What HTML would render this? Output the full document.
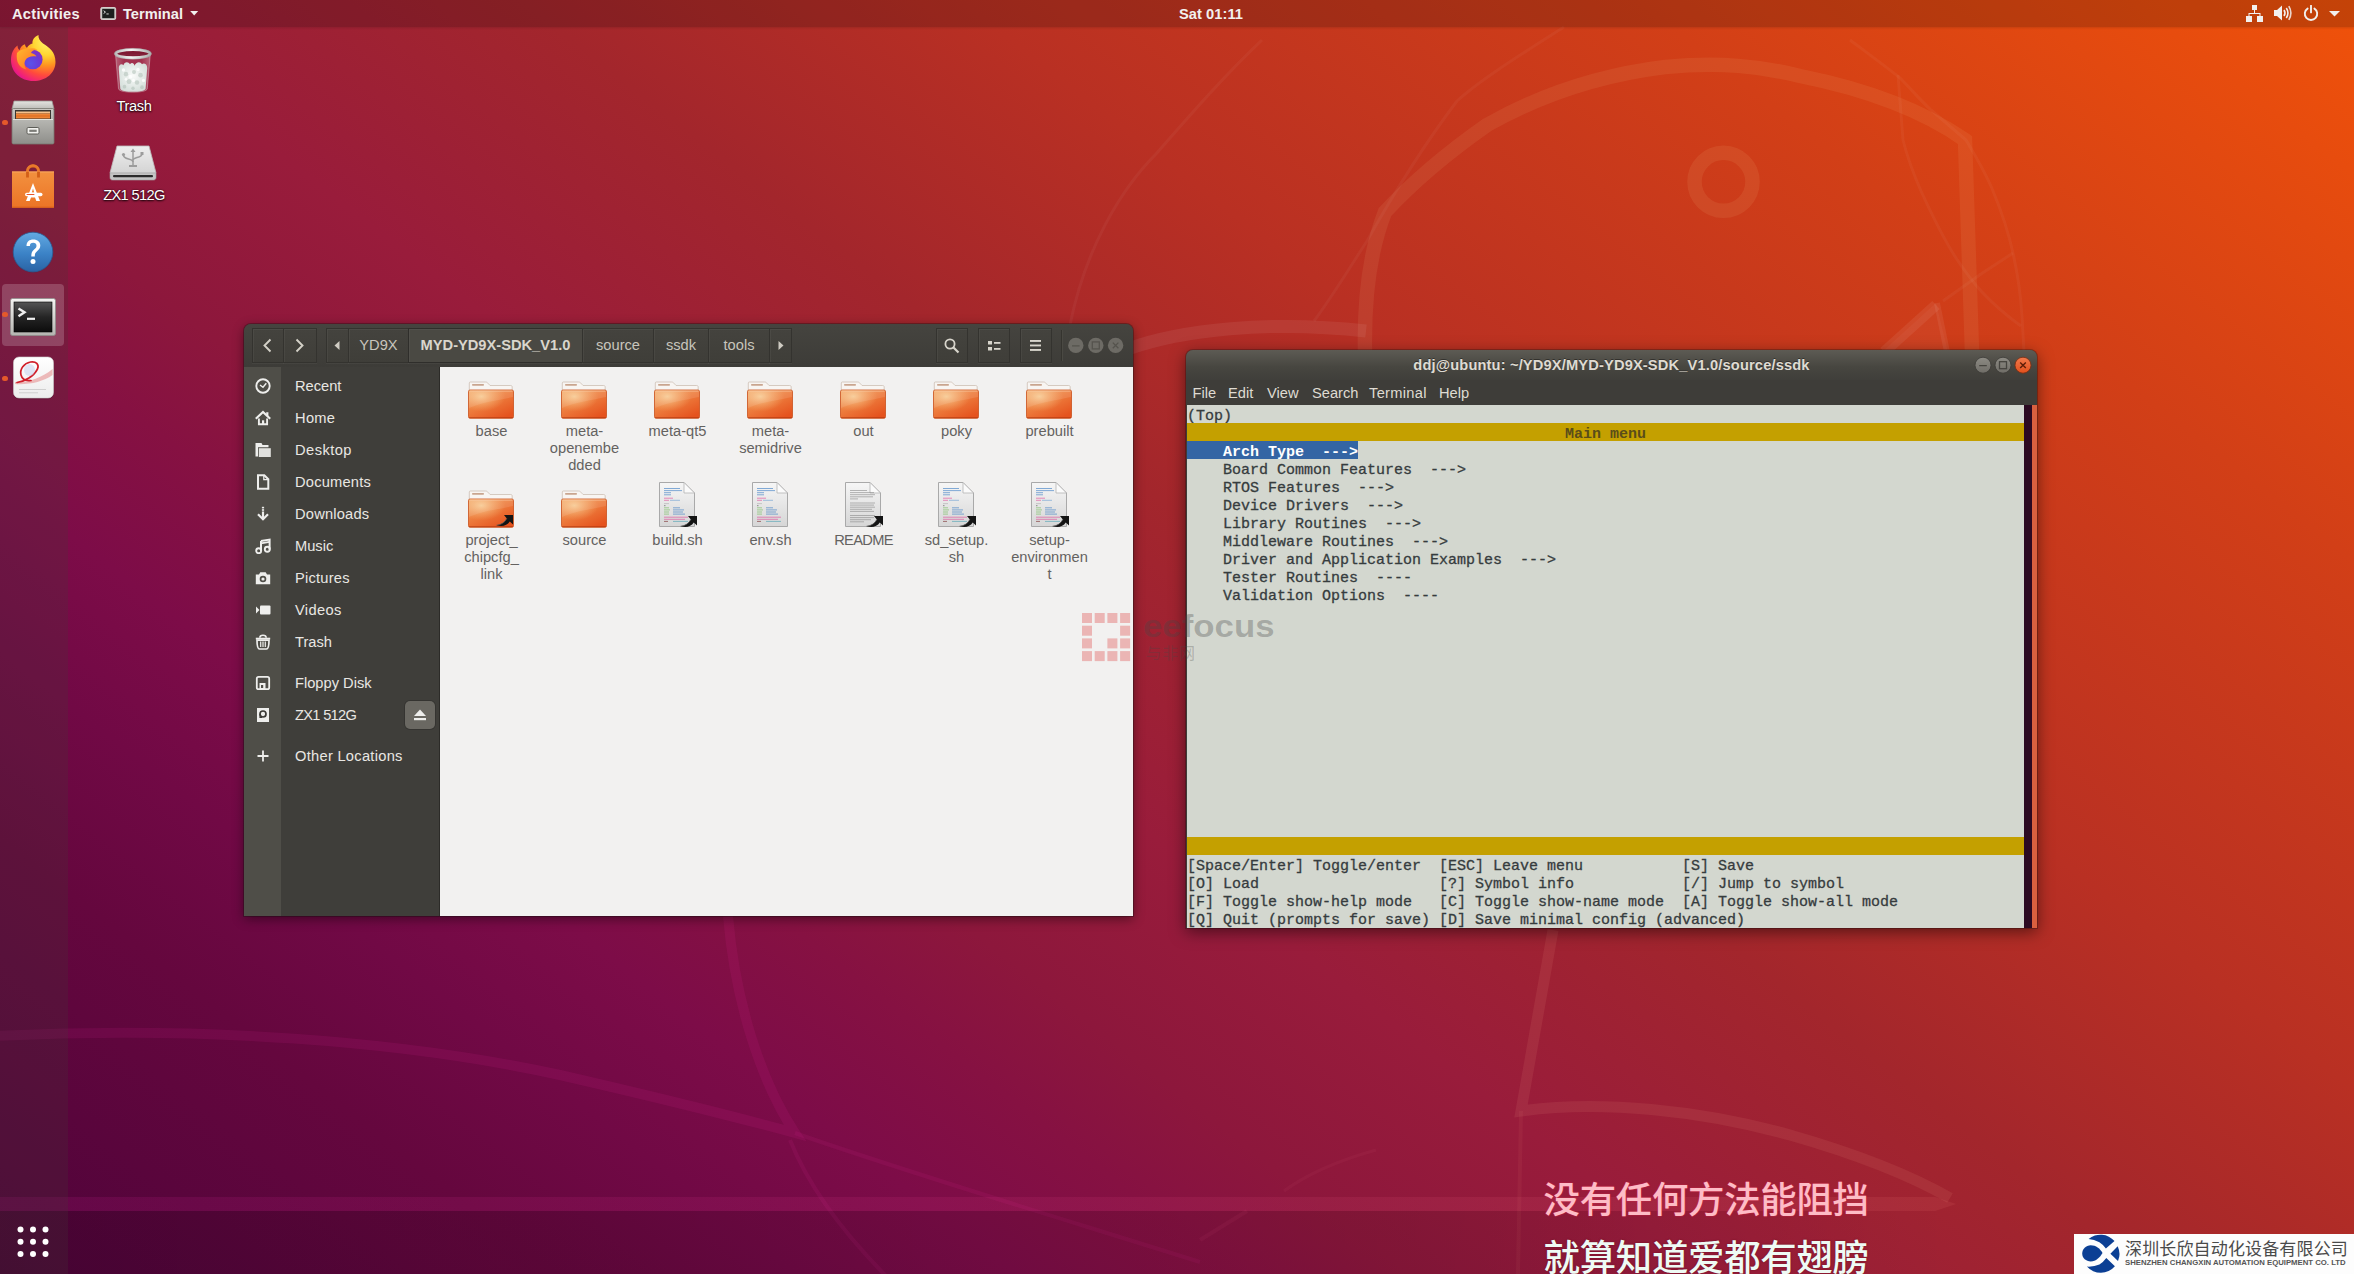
<!DOCTYPE html>
<html lang="en"><head><meta charset="utf-8"><title>Ubuntu Desktop</title>
<style>
html,body{margin:0;padding:0}
body{width:2354px;height:1274px;overflow:hidden;position:relative;background:#8c1839;
 font-family:"Liberation Sans","Noto Sans CJK SC",sans-serif;font-size:14.67px;line-height:17px;color:#fff;
 -webkit-font-smoothing:antialiased}
.abs{position:absolute}
#wall{position:absolute;left:0;top:0;width:2354px;height:1274px;
 background:linear-gradient(38deg,rgb(78,3,58) 0%,rgb(101,7,62) 14%,rgb(113,9,69) 20%,rgb(125,12,72) 25.5%,rgb(134,17,66) 31%,rgb(141,23,60) 35.4%,rgb(153,28,59) 43%,rgb(163,38,44) 54%,rgb(185,48,35) 65%,rgb(210,63,23) 82%,rgb(231,76,14) 94.4%,rgb(240,82,10) 100%)}
#wallsvg{position:absolute;left:0;top:0}
/* top bar */
#panel{position:absolute;left:0;top:0;width:2354px;height:27px;background:rgba(0,0,0,.18);color:#f2f0ee;font-weight:bold;box-shadow:0 1px 2px rgba(0,0,0,.12)}
#panel span{position:absolute;top:5.6px;line-height:17px;white-space:pre}
/* dock */
#dock{position:absolute;left:0;top:27px;width:68px;height:1247px;background:rgba(64,60,54,.21)}
.dot{position:absolute;left:2.300px;width:5.400px;height:5.400px;border-radius:3px;background:#e5592b}
/* desktop icons */
.dlabel{position:absolute;width:140px;text-align:center;color:#fff;text-shadow:0 1px 2px rgba(0,0,0,.9),0 0 2px rgba(0,0,0,.6);white-space:pre}
/* nautilus */
#naut{position:absolute;left:244px;top:324px;width:889px;height:592px;border-radius:7px 7px 0 0;background:#3f3e3a;box-shadow:0 3px 12px rgba(0,0,0,.45),0 0 0 1px rgba(30,20,20,.35);overflow:hidden}
#nhead{position:absolute;left:0;top:0;width:889px;height:43px;background:linear-gradient(#45443f,#3d3c38)}
.hbtn{position:absolute;top:4px;height:35px;box-sizing:border-box;border:1px solid #34332f;background:linear-gradient(#44433e,#3f3e39);box-shadow:inset 1px 1px 0 rgba(255,255,255,.045),0 1px 0 rgba(255,255,255,.04);color:#c8c5bc;text-align:center;line-height:33px;white-space:pre}
.hbtn.sel{background:#4a4943;color:#d9d6cd;font-weight:bold;border-color:#2f2e2b}
#nstrip{position:absolute;left:0;top:43px;width:37px;height:549px;background:#4f4e48}
#nside{position:absolute;left:37px;top:43px;width:158px;height:549px;background:#3f3e3a}
#nview{position:absolute;left:195px;top:43px;width:694px;height:549px;background:#f2f1f0;border-left:1px solid #2c2b28;box-sizing:border-box}
.srow{position:absolute;left:51px;color:#e9e7e3;white-space:pre;line-height:17px}
.sic{position:absolute;left:11px;width:16px;height:16px}
.flabel{position:absolute;width:110px;text-align:center;color:#646260;line-height:17px;white-space:pre}
.fic{position:absolute}
/* terminal */
#term{position:absolute;left:1186px;top:350px;width:851px;height:578px;border-radius:7px 7px 0 0;background:#3e3d39;box-shadow:0 4px 16px rgba(0,0,0,.5),0 0 0 1px rgba(40,20,20,.3);overflow:hidden}
#ttitle{position:absolute;left:0;top:0;width:851px;height:31px;background:linear-gradient(#5d5b54,#474640 55%,#3f3e3a)}
#ttitle span{position:absolute;left:0;width:851px;top:7px;text-align:center;font-weight:bold;color:#dfdbd2;letter-spacing:.145px;white-space:pre;text-shadow:0 -1px 0 rgba(0,0,0,.4)}
#tmenu{position:absolute;left:0;top:30px;width:851px;height:25px;background:#3e3d39;color:#dfdbd2}
#tmenu span{position:absolute;top:4.7px;white-space:pre}
#tbody{position:absolute;left:1px;top:55px;width:837px;height:523px;background:#d3d7cf;color:#363c3e;-webkit-text-stroke:.3px #363c3e;
 font-family:"Liberation Mono","DejaVu Sans Mono",monospace;font-size:15px;line-height:18px}
.tl{position:absolute;left:0;height:18px;white-space:pre;padding-top:3px;margin-top:0;line-height:18px}
#tpad{position:absolute;left:838px;top:55px;width:8px;height:523px;background:#2c0a22}
#tscroll{position:absolute;left:846px;top:55px;width:5px;height:523px;background:#d9603f}
.wc{position:absolute;width:16px;height:16px;border-radius:8px;box-sizing:border-box}
</style></head><body>
<div id="wall"></div>
<svg id="wallsvg" width="2354" height="1274" viewBox="0 0 2354 1274">
 <g fill="none" stroke="#fff" stroke-opacity=".065" stroke-linejoin="miter" stroke-linecap="butt">
  <circle cx="1723.500" cy="181.800" r="29" stroke-width="14.500" stroke="#ffe9a0" stroke-opacity=".085"/>
  <path d="M1365,352 C1364,300 1370,250 1385,212 C1410,185 1440,158 1487,125 C1540,95 1600,75 1665,67 C1720,62 1760,66 1800,76 C1870,90 1925,112 1965,140 L1972,352" stroke-width="14.500" stroke="#ffe9a0" stroke-opacity=".08"/>
  <path d="M1128,349 C1180,330 1270,320 1366,331" stroke-width="13"/>
  <path d="M1882,352 L1936,303 L1948,352 Z" fill="#fff" fill-opacity=".035" stroke="none"/><path d="M1884,352 L1936,305" stroke-width="11"/><path d="M1937,303 L1947,352" stroke-width="6"/>
  <path d="M1553,930 L1521,1111 C1600,1100 1700,1110 1790,1135 C1860,1155 1915,1178 1950,1198" stroke-width="11" stroke="#ffb090" stroke-opacity=".095"/>
  <path d="M-5,1036 C200,1026 400,1040 560,1075 C660,1098 740,1118 795,1133 C760,1080 735,1000 728,916" stroke-width="10" stroke="#ff30b0" stroke-opacity=".09"/>
  <path d="M795,1133 C900,1170 1050,1215 1200,1262" stroke-width="4" stroke="#ff30b0" stroke-opacity=".08"/><path d="M1200,1240 L1247,1211" stroke-width="4" stroke="#ff60a0" stroke-opacity=".07"/><path d="M1284,1191 C1310,1172 1340,1160 1376,1150" stroke-width="3" stroke="#ff80a0" stroke-opacity=".05"/><path d="M1521,1111 L1518,1274" stroke-width="4" stroke="#ffb090" stroke-opacity=".06"/>
  <path d="M790,1140 C810,1190 850,1240 890,1280" stroke-width="4" stroke="#ff30b0" stroke-opacity=".08"/>
  <path d="M1070,325 C1085,250 1120,190 1156,154 C1190,115 1225,75 1262,40" stroke-width="3" stroke-opacity=".04"/><path d="M1564,27 C1520,55 1480,80 1457,101 C1420,150 1390,200 1367,241 C1345,275 1330,300 1314,321" stroke-width="3" stroke-opacity=".04"/>
  <path d="M1850,40 C1870,55 1885,66 1900,78 C1912,90 1920,100 1931,110 L1966,140 C1978,160 1987,176 1993,191 C2003,215 2009,235 2013,253 C2019,280 2021,300 2022,316 L2024,352" stroke-width="3" stroke-opacity=".04"/><path d="M1898,75 L1903,140 C1908,160 1914,175 1921,191 C1932,215 1943,238 1956,258 C1964,270 1972,281 1981,291 C1994,305 2007,316 2021,326" stroke-width="3" stroke-opacity=".04"/><path d="M2013,253 L1981,274 L1943,301" stroke-width="3" stroke-opacity=".04"/>
 </g>
 <defs><linearGradient id="bandg" x1="0" y1="0" x2="1" y2="0"><stop offset="0" stop-color="#ff28bc" stop-opacity=".10"/><stop offset=".5" stop-color="#ff4a9a" stop-opacity=".10"/><stop offset="1" stop-color="#ff8a80" stop-opacity=".10"/></linearGradient></defs><path d="M0,1197 L1935,1197 L1956,1204 L1935,1211 L0,1211 Z" fill="url(#bandg)"/>
 <defs><linearGradient id="tailg" x1="0" y1="0" x2="1" y2="0"><stop offset="0" stop-color="#000" stop-opacity=".13"/><stop offset=".3" stop-color="#000" stop-opacity=".11"/><stop offset=".6" stop-color="#000" stop-opacity=".095"/><stop offset=".72" stop-color="#000" stop-opacity=".045"/><stop offset=".83" stop-color="#000" stop-opacity="0"/></linearGradient></defs><rect x="0" y="1211" width="2354" height="63" fill="url(#tailg)"/>
</svg>
<div id="panel">
 <span style="left:12px;letter-spacing:.28px">Activities</span>
 <svg class="abs" style="left:100px;top:6.8px" width="16.5" height="13" viewBox="0 0 17 14"><rect x=".5" y=".5" width="16" height="13" rx="1.5" fill="#c4c4c0" stroke="#dcdcd8"/><rect x="2" y="2" width="13" height="10" fill="#1d1f1e"/><path d="M3.5,4 L5.5,5.5 L3.5,7 M6.5,7.5 H9" stroke="#e8e8e8" stroke-width="1" fill="none"/></svg>
 <span style="left:123px">Terminal</span>
 <svg class="abs" style="left:190.400px;top:11.200px" width="8.400" height="4.800" viewBox="0 0 10 6"><path d="M0,0 H10 L5,5.5 Z" fill="#f2f0ee"/></svg>
 <span style="left:1179px;letter-spacing:.05px">Sat 01:11</span>
 <!-- network -->
 <svg class="abs" style="left:2246px;top:5px" width="17" height="17" viewBox="0 0 17 17"><g fill="#f2f0ee"><rect x="6" y="0" width="5" height="5"/><rect x="0" y="11" width="6" height="6"/><rect x="11" y="11" width="6" height="6"/><path d="M8,5 h1 v3 h5.5 v3 h-1 v-2 h-10 v2 h-1 v-3 h5.5 z"/></g></svg>
 <!-- volume -->
 <svg class="abs" style="left:2274px;top:5px" width="18" height="16" viewBox="0 0 18 16"><path d="M0,5 H3 L8,0.5 V15.5 L3,11 H0 Z" fill="#f2f0ee"/><g fill="none" stroke="#f2f0ee" stroke-width="1.6"><path d="M10,5 Q12,8 10,11"/><path d="M12.3,3 Q15.6,8 12.3,13"/><path d="M14.8,1.2 Q19,8 14.8,14.8" stroke-opacity=".85"/></g></svg>
 <!-- power -->
 <svg class="abs" style="left:2303px;top:5px" width="16" height="16" viewBox="0 0 16 16"><g fill="none" stroke="#f2f0ee" stroke-width="1.9" stroke-linecap="round"><path d="M4.6,3.6 A6.2,6.2 0 1 0 11.4,3.6"/><path d="M8,0.8 V7.4"/></g></svg>
 <svg class="abs" style="left:2329px;top:11px" width="11" height="6" viewBox="0 0 11 6"><path d="M0,0 H11 L5.5,5.5 Z" fill="#f2f0ee"/></svg>
</div>
<div id="dock"></div>
<!-- firefox -->
<svg class="abs" style="left:10px;top:34px" width="47" height="48" viewBox="0 0 47 48">
 <defs>
  <radialGradient id="ffg" cx="80%" cy="14%" r="100%"><stop offset="0" stop-color="#fff56a"/><stop offset=".3" stop-color="#ffd531"/><stop offset=".52" stop-color="#ff9420"/><stop offset=".74" stop-color="#ff4a3d"/><stop offset=".92" stop-color="#f0207a"/><stop offset="1" stop-color="#e01590"/></radialGradient>
  <radialGradient id="ffp" cx="40%" cy="70%" r="75%"><stop offset="0" stop-color="#5b52e8"/><stop offset=".6" stop-color="#6a3ad6"/><stop offset="1" stop-color="#8a2fc0"/></radialGradient>
  <linearGradient id="ffo" x1="0" y1="0" x2="1" y2="1"><stop offset="0" stop-color="#ffb92e"/><stop offset="1" stop-color="#ff6a20"/></linearGradient>
 </defs>
 <path d="M23.5,47 C10.5,47 1,38 1,26 C1,19.500 3.500,14.500 7.500,11.500 C7.500,13.500 8.200,15.200 9.500,16.200 C10.500,13 12.500,11 15,10.200 C15,11.800 15.800,13 17,13.800 C18,11.500 20.500,10 22.500,9.500 C22,6 24.500,2.500 28.500,1 C28,4 30,7 33,9.500 C39.500,13.500 45.500,18 45.500,28 C45.500,39 36,47 23.500,47 Z" fill="url(#ffg)"/>
 <circle cx="22.800" cy="25.500" r="9.800" fill="url(#ffp)"/>
 <path d="M7,19 C10,15.500 14,14.500 17.500,15.200 C20,14 24,14 27.500,15.600 C24,15.800 22,17 21,19 C23.500,19.500 25.500,20.500 26.500,22.500 C22,21.700 17.500,22.500 15.500,26 C13.700,29 14.500,33 16.500,35.500 C10,34.500 5.500,28 7,19 Z" fill="url(#ffo)"/>
</svg>
<!-- files -->
<svg class="abs" style="left:11px;top:100px" width="44" height="45" viewBox="0 0 44 45">
 <defs><linearGradient id="fcg" x1="0" y1="0" x2="0" y2="1"><stop offset="0" stop-color="#c9c9c4"/><stop offset="1" stop-color="#8e8e8a"/></linearGradient>
 <linearGradient id="fct" x1="0" y1="0" x2="0" y2="1"><stop offset="0" stop-color="#e4e4e0"/><stop offset="1" stop-color="#bcbcb7"/></linearGradient></defs>
 <path d="M3,1 H41 L43,9 H1 Z" fill="url(#fct)" stroke="#9a9a96" stroke-width=".8"/>
 <rect x="1" y="8.500" width="42" height="35.500" rx="1.500" fill="url(#fcg)" stroke="#77776f" stroke-width=".8"/>
 <rect x="4" y="10" width="36" height="9.500" fill="#3a3631"/>
 <rect x="5" y="11.500" width="34" height="2" fill="#f6c08a"/><rect x="5" y="13.500" width="34" height="5" fill="#ee8436"/><rect x="5" y="15.500" width="34" height="1" fill="#d96a1e"/>
 <path d="M2,19.500 H42" stroke="#e2e2de" stroke-width="1"/>
 <rect x="16" y="27.500" width="12" height="6.500" rx="1.200" fill="#f1f1ee" stroke="#5c5c57" stroke-width="1"/><rect x="18.300" y="29.700" width="7.400" height="2.200" fill="#7d7d78"/>
</svg>
<!-- software -->
<svg class="abs" style="left:11px;top:164px" width="44" height="45" viewBox="0 0 44 45">
 <defs><linearGradient id="swg" x1="0" y1="0" x2="0" y2="1"><stop offset="0" stop-color="#f2913f"/><stop offset="1" stop-color="#ec7426"/></linearGradient></defs>
 <path d="M16.500,14 V7.500 A5.500,5.500 0 0 1 27.500,7.500 V14" fill="none" stroke="#dd6a1f" stroke-width="2.800"/>
 <path d="M1,7.500 H43 V43.700 H1 Z" fill="url(#swg)"/>
 <path d="M1,8 H43" stroke="#f7a55e" stroke-width="1"/><path d="M1,43.200 H43" stroke="#d9611a" stroke-width="1"/>
 <path d="M16.500,13.500 V8 M27.500,13.500 V8" stroke="#d25f18" stroke-width="2.800"/>
 <path d="M16.500,8 V6.500 A5.500,5 0 0 1 27.500,6.500 V8" fill="none" stroke="#e8792c" stroke-width="2.400"/>
 <path d="M22,19 L29,37 H25.300 L24,33.500 H20 L18.700,37 H15 Z M22,24.500 L20.800,28.500 H23.200 Z" fill="#fff"/>
 <rect x="14" y="28.800" width="17.500" height="3.400" rx="1.700" fill="#fff"/><rect x="15.500" y="29.900" width="8" height="1.200" rx=".6" fill="#e8552a"/>
</svg>
<!-- help -->
<svg class="abs" style="left:12px;top:231px" width="42" height="42" viewBox="0 0 42 42">
 <defs><linearGradient id="hpg" x1="0" y1="0" x2="0" y2="1"><stop offset="0" stop-color="#63a9e2"/><stop offset=".55" stop-color="#3b82c6"/><stop offset="1" stop-color="#2a63a4"/></linearGradient></defs>
 <circle cx="21" cy="21.500" r="20" fill="#1d3f66" fill-opacity=".35"/>
 <circle cx="21" cy="21" r="19.800" fill="url(#hpg)" stroke="#2b5c94" stroke-width=".8"/>
 <path d="M14.500,15 C14.500,10.500 17.500,8.500 21.300,8.500 C25.500,8.500 28.300,11 28.300,14.500 C28.300,17.500 26.500,19 24.800,20.500 C23.300,21.800 22.800,22.800 22.800,25.500 H19.300 C19.300,22 19.900,20.500 21.800,18.800 C23.400,17.400 24.500,16.500 24.500,14.700 C24.500,13 23.300,11.800 21.200,11.800 C19,11.800 17.900,13 17.900,15 Z" fill="#fff"/>
 <circle cx="21" cy="30.500" r="2.500" fill="#fff"/>
</svg>
<!-- terminal highlight + icon -->
<div class="abs" style="left:2px;top:284px;width:62px;height:62px;border-radius:4px;background:rgba(255,255,255,.19)"></div>
<svg class="abs" style="left:10px;top:298px" width="46" height="38" viewBox="0 0 46 38">
 <defs><linearGradient id="tmf" x1="0" y1="0" x2="0" y2="1"><stop offset="0" stop-color="#f4f4f2"/><stop offset="1" stop-color="#b4b4b0"/></linearGradient>
 <linearGradient id="tms" x1="0" y1="0" x2="0" y2="1"><stop offset="0" stop-color="#555"/><stop offset=".5" stop-color="#252525"/><stop offset="1" stop-color="#0c0c0c"/></linearGradient></defs>
 <rect x=".5" y=".5" width="45" height="37" rx="2" fill="url(#tmf)" stroke="#8f8f8b" stroke-width=".8"/>
 <rect x="4" y="4" width="38" height="30" fill="url(#tms)" stroke="#000" stroke-width=".6"/>
 <path d="M8.500,10.500 L14.500,14.300 L8.500,18.200" fill="none" stroke="#f0f0f0" stroke-width="2.400"/>
 <rect x="17" y="19.700" width="8" height="2.200" fill="#f0f0f0"/>
</svg>
<!-- evince -->
<svg class="abs" style="left:12px;top:356px" width="43" height="44" viewBox="0 0 43 44">
 <defs><linearGradient id="evg" x1="0" y1="0" x2="0" y2="1"><stop offset="0" stop-color="#ffffff"/><stop offset="1" stop-color="#ececec"/></linearGradient></defs>
 <rect x="1.500" y="2.200" width="40" height="41" rx="5.500" fill="#3a0a1c" fill-opacity=".35"/>
 <rect x="1.500" y="1" width="40" height="41" rx="5.500" fill="url(#evg)" stroke="#cfcfcf" stroke-width=".6"/>
 <path d="M3,26 C14,27 30,22 40.500,13 V19 C31,26 16,29 3,28 Z" fill="#e8a0a0" fill-opacity=".7"/>
 <path d="M5,26.500 C13,25.500 22,20 25.500,13 C27.500,8.500 24,5 18.500,6 C12,7.200 7.500,13 9,19 C10,23 14,25 19,24.500" fill="none" stroke="#d01f2a" stroke-width="1.700" stroke-linecap="round"/>
 <ellipse cx="17.500" cy="14" rx="5.500" ry="6" fill="#c8d4ee" fill-opacity=".55"/>
 <path d="M7,33.500 H34 M7,36.800 H26" stroke="#cfcfcf" stroke-width="1"/>
</svg>
<div class="dot" style="top:120px"></div><div class="dot" style="top:312px"></div><div class="dot" style="top:376px"></div>
<!-- show apps -->
<svg class="abs" style="left:17px;top:1226px" width="32" height="32" viewBox="0 0 32 32"><g fill="#fff">
<circle cx="3.500" cy="3.500" r="3"/><circle cx="16" cy="3.500" r="3"/><circle cx="28.500" cy="3.500" r="3"/>
<circle cx="3.500" cy="15.800" r="3"/><circle cx="16" cy="15.800" r="3"/><circle cx="28.500" cy="15.800" r="3"/>
<circle cx="3.500" cy="28" r="3"/><circle cx="16" cy="28" r="3"/><circle cx="28.500" cy="28" r="3"/></g></svg>
<!-- desktop icons -->
<svg class="abs" style="left:112px;top:46px" width="42" height="50" viewBox="0 0 42 48" preserveAspectRatio="none">
 <defs><linearGradient id="trb" x1="0" y1="0" x2="1" y2="0"><stop offset="0" stop-color="#ffffff" stop-opacity=".30"/><stop offset=".25" stop-color="#ffffff" stop-opacity=".10"/><stop offset=".75" stop-color="#ffffff" stop-opacity=".10"/><stop offset="1" stop-color="#ffffff" stop-opacity=".32"/></linearGradient>
 <linearGradient id="trr" x1="0" y1="0" x2="1" y2="0"><stop offset="0" stop-color="#bdbdbd"/><stop offset=".45" stop-color="#f4f4f4"/><stop offset="1" stop-color="#b0b0b0"/></linearGradient>
 <radialGradient id="trp" cx="50%" cy="45%" r="60%"><stop offset="0" stop-color="#fafbfa"/><stop offset="1" stop-color="#d3ded9"/></radialGradient></defs>
 <path d="M3.500,8 L6.500,41 C6.800,45.500 35,45.500 35.300,41 L38.300,8 Z" fill="url(#trb)" stroke="#e6e6e6" stroke-opacity=".45" stroke-width=".8"/>
 <path d="M6.800,22 C6.300,18 9.500,16.500 11.500,18.500 C12,15 16.500,14.500 18,17.500 C19.500,15.500 22,16 22.500,19 C24,15 28.500,14.500 30,17.500 C31.500,16 35.300,17 35.200,21 L33.600,41 C33,45 8.800,45 8.300,41 Z" fill="url(#trp)"/>
 <g fill="#aebfb7" fill-opacity=".55"><circle cx="14" cy="27" r="2.200"/><circle cx="22" cy="25" r="2"/><circle cx="28.500" cy="28" r="2.300"/><circle cx="17" cy="34" r="2.400"/><circle cx="25" cy="35" r="2.200"/><circle cx="12.500" cy="39" r="1.800"/><circle cx="30" cy="39.500" r="1.800"/><circle cx="21" cy="40.500" r="1.700"/></g>
 <g fill="#ffffff" fill-opacity=".8"><circle cx="11.500" cy="23" r="1.700"/><circle cx="18.500" cy="29.500" r="1.800"/><circle cx="26" cy="22.500" r="1.700"/><circle cx="31.500" cy="33" r="1.600"/><circle cx="21.500" cy="33" r="1.500"/><circle cx="14" cy="32" r="1.300"/></g>
 <ellipse cx="20.900" cy="7.400" rx="17.300" ry="3.900" fill="#7c1a33" fill-opacity=".9" stroke="url(#trr)" stroke-width="2.800"/>
 <ellipse cx="20.900" cy="7.400" rx="18.700" ry="5.200" fill="none" stroke="#8e8e8e" stroke-opacity=".55" stroke-width=".6"/>
</svg>
<div class="dlabel" style="left:64px;top:97.5px;letter-spacing:-.35px">Trash</div>
<svg class="abs" style="left:109px;top:145px" width="48" height="36" viewBox="0 0 48 36">
 <defs><linearGradient id="usg" x1="0" y1="0" x2="0" y2="1"><stop offset="0" stop-color="#eeeeee"/><stop offset="1" stop-color="#d4d4d4"/></linearGradient></defs>
 <path d="M8,1 H40 L47,28 H1 Z" fill="url(#usg)" stroke="#bdbdbd" stroke-width=".8"/>
 <path d="M1,28 H47 V32.500 C47,34 46,35 44.500,35 H3.500 C2,35 1,34 1,32.500 Z" fill="#c4c4c4" stroke="#a5a5a5" stroke-width=".6"/>
 <rect x="4" y="30" width="40" height="2.200" rx="1" fill="#2b2b2b"/>
 <g fill="none" stroke="#9c9c9c" stroke-width="1.500"><path d="M24,6 V21"/><path d="M24,17 C24,13 14,15 14.500,10"/><path d="M24,15 C24,12 33,13 33,9"/></g>
 <path d="M21.500,7 L24,3.500 L26.500,7 Z" fill="#9c9c9c"/><circle cx="14.500" cy="9.500" r="1.600" fill="#9c9c9c"/><rect x="31.500" y="7" width="3" height="3" fill="#9c9c9c"/><rect x="20" y="20" width="8" height="2" fill="#9c9c9c"/>
</svg>
<div class="dlabel" style="left:64px;top:187px;letter-spacing:-.65px">ZX1 512G</div>
<svg width="0" height="0" style="position:absolute"><defs>
<linearGradient id="fg1" x1="0" y1="0" x2=".75" y2="1"><stop offset="0" stop-color="#f3a868"/><stop offset=".45" stop-color="#ee8040"/><stop offset="1" stop-color="#e5531e"/></linearGradient>
<radialGradient id="fg2" cx="28%" cy="22%" r="55%"><stop offset="0" stop-color="#f8d09a" stop-opacity=".9"/><stop offset="1" stop-color="#f5b070" stop-opacity="0"/></radialGradient>
<linearGradient id="dg1" x1="0" y1="0" x2="0" y2="1"><stop offset="0" stop-color="#f6f6f6"/><stop offset="1" stop-color="#d6d6d6"/></linearGradient>
<symbol id="folder" viewBox="0 0 46 38">
 <path d="M2.300,1 H17.500 C18.800,1 19.300,1.500 20.200,2.500 L22,4.500 H42.700 C43.600,4.500 44.200,5 44.200,6 V14 H1.300 V2 C1.300,1.400 1.700,1 2.300,1 Z" fill="#f8f5f2" stroke="#cdbfb4" stroke-width=".8"/>
 <rect x="4" y="3" width="12" height="1.700" rx=".8" fill="#c9a58f"/>
 <rect x=".5" y="9" width="45" height="28.300" rx="1.600" fill="url(#fg1)" stroke="#c9501c" stroke-width=".8"/>
 <rect x="1" y="9.500" width="44" height="27.300" rx="1.400" fill="url(#fg2)"/>
 <path d="M1,10 H45 V16 C32,19 14,21 1,27 Z" fill="#fff" fill-opacity=".10"/>
 <path d="M1.200,36.600 H44.800" stroke="#a8300b" stroke-width="1" stroke-opacity=".5"/>
 <path d="M1.500,10 H44.500" stroke="#f9cda8" stroke-width="1" stroke-opacity=".75"/>
</symbol>
<symbol id="docscript" viewBox="0 0 38 47">
 <path d="M1.500,1.500 H26 L36.500,12 V45.500 H1.500 Z" fill="url(#dg1)" stroke="#a9a9a9" stroke-width="1"/>
 <path d="M26,1.500 V12 H36.500 Z" fill="#fbfbfb" stroke="#b4b4b4" stroke-width=".8"/>
 <g stroke-width=".75" fill="none" stroke-opacity=".85">
  <path d="M6,7.500 H22 M6,9.600 H24 M6,11.700 H13 M6,13.800 H13" stroke="#3f7fc4"/>
  <path d="M6,17.200 H15 M6,19.300 H11" stroke="#de4f9a"/><path d="M12,19.300 H22" stroke="#6fa0d2"/>
  <path d="M6,22.600 H11" stroke="#b0b0b0"/><path d="M6,24.700 H7.500" stroke="#555"/>
  <path d="M6,26.800 H11 M6,28.900 H12 M6,31 H11 M6,33.100 H11" stroke="#74bd5e"/>
  <path d="M15,26.800 H22 M15,28.900 H26 M15,31 H25 M15,33.100 H27" stroke="#3f7fc4"/>
  <path d="M6,36.200 H30 M6,38.300 H27" stroke="#de4f9a"/>
  <path d="M6,40.400 H10" stroke="#7b2c2c"/><path d="M15,40.400 H30" stroke="#4da0b2"/>
 </g>
</symbol>
<symbol id="doctext" viewBox="0 0 38 47">
 <path d="M1.500,1.500 H26 L36.500,12 V45.500 H1.500 Z" fill="url(#dg1)" stroke="#a9a9a9" stroke-width="1"/>
 <path d="M26,1.500 V12 H36.500 Z" fill="#fbfbfb" stroke="#b4b4b4" stroke-width=".8"/>
 <g stroke="#8d8d8d" stroke-width=".7" fill="none" stroke-opacity=".9">
  <path d="M6,9.500 H23 M6,11.600 H30 M6,13.700 H31 M6,15.800 H29 M6,17.900 H14"/>
  <path d="M6,22 H31 M6,24.100 H30 M6,26.200 H31 M6,28.300 H28 M6,30.400 H30"/>
  <path d="M6,34.500 H31 M6,36.600 H30 M6,38.700 H27 M6,40.800 H20"/>
 </g>
</symbol>
<symbol id="lnk" viewBox="0 0 17 12">
 <path d="M8,0 H17 V9.500 L13.800,6.500 C11,10.500 6.500,12 0.500,10.200 C5.500,9.800 8.800,7.500 10.800,3.600 Z" fill="#141414"/>
 <path d="M0.500,10.200 C5.500,9.800 8.800,7.500 10.800,3.600" stroke="#5a5a5a" stroke-width=".7" fill="none"/>
</symbol>
</defs></svg>
<div id="naut">
<div id="nhead">
<div class="hbtn " style="left:8px;width:32px;"></div>
<div class="hbtn " style="left:39px;width:34px;"></div>
<div class="hbtn " style="left:82px;width:23px;"></div>
<div class="hbtn " style="left:104px;width:61px;">YD9X</div>
<div class="hbtn sel" style="left:164px;width:175px;">MYD-YD9X-SDK_V1.0</div>
<div class="hbtn " style="left:338px;width:72px;">source</div>
<div class="hbtn " style="left:409px;width:56px;">ssdk</div>
<div class="hbtn " style="left:464px;width:62px;">tools</div>
<div class="hbtn " style="left:525px;width:23px;"></div>
<div class="hbtn " style="left:692px;width:32px;"></div>
<div class="hbtn " style="left:734px;width:32px;"></div>
<div class="hbtn " style="left:776px;width:32px;"></div>
<svg class="abs" style="left:0;top:0" width="889" height="43" viewBox="0 0 889 43">
<g fill="none" stroke="#d4d1c8" stroke-width="1.900" stroke-linecap="butt" stroke-linejoin="miter">
 <path d="M26.500,15.500 L20.500,21.500 L26.500,27.500"/><path d="M52.500,15.500 L58.500,21.500 L52.500,27.500"/>
</g>
<g fill="#cfccc3"><path d="M95.500,17 V26 L90.500,21.500 Z"/><path d="M534.500,17 V26 L539.500,21.500 Z"/></g>
<g fill="none" stroke="#d8d5cc" stroke-width="1.800"><circle cx="706" cy="20" r="4.600"/><path d="M709.500,23.500 L714.500,28.500" stroke-width="2.200"/></g>
<g fill="#d8d5cc"><rect x="744" y="17" width="4" height="3.500"/><rect x="744" y="23" width="4" height="3.500"/><rect x="750" y="18" width="6.500" height="1.800"/><rect x="750" y="24" width="6.500" height="1.800"/>
 <rect x="786" y="16" width="11" height="1.900"/><rect x="786" y="20.500" width="11" height="1.900"/><rect x="786" y="25" width="11" height="1.900"/></g>
<path d="M817.500,6 V37" stroke="#35342f" stroke-width="1"/><path d="M818.500,6 V37" stroke="#4a4943" stroke-width="1"/>
<g><circle cx="831.800" cy="21.400" r="7.700" fill="#6d6b65"/><circle cx="851.800" cy="21.400" r="7.700" fill="#6d6b65"/><circle cx="871.600" cy="21.400" r="7.700" fill="#6d6b65"/></g>
<g stroke="#55534d" stroke-width="1.300" fill="none"><path d="M828,21.900 H835.600"/><rect x="848.300" y="17.900" width="7" height="7"/><path d="M868.800,18.600 L874.400,24.200 M874.400,18.600 L868.800,24.200"/></g>
</svg>
</div>
<div id="nstrip"></div><div id="nside"></div><div id="nview"></div>
<div class="srow" style="top:54px;letter-spacing:0">Recent</div>
<div class="srow" style="top:86px;letter-spacing:.3px">Home</div>
<div class="srow" style="top:118px;letter-spacing:.45px">Desktop</div>
<div class="srow" style="top:150px;letter-spacing:.2px">Documents</div>
<div class="srow" style="top:182px;letter-spacing:.2px">Downloads</div>
<div class="srow" style="top:214px;letter-spacing:0">Music</div>
<div class="srow" style="top:246px;letter-spacing:.23px">Pictures</div>
<div class="srow" style="top:278px;letter-spacing:.35px">Videos</div>
<div class="srow" style="top:310px;letter-spacing:0">Trash</div>
<div class="srow" style="top:351px;letter-spacing:0">Floppy Disk</div>
<div class="srow" style="top:383px;letter-spacing:-.7px">ZX1 512G</div>
<div class="srow" style="top:424px;letter-spacing:.28px">Other Locations</div>
<svg class="sic" style="top:54px" viewBox="0 0 16 16"><circle cx="8" cy="8" r="6.700" fill="none" stroke="#eeeeec" stroke-width="1.900"/><path d="M5,7 L8,9.300 L11.300,5.300" fill="none" stroke="#eeeeec" stroke-width="1.400"/></svg>
<svg class="sic" style="top:86px" viewBox="0 0 16 16"><path d="M0.800,8.800 L8,2 L15.200,8.800" fill="none" stroke="#eeeeec" stroke-width="2.200" stroke-linejoin="miter"/><path d="M11.200,2.300 H13.400 V6.200 L11.200,4.200 Z" fill="#eeeeec"/><path d="M3.900,8.500 V14.200 H12.100 V8.500" fill="none" stroke="#eeeeec" stroke-width="1.900"/><rect x="7" y="10.300" width="2.200" height="4" fill="#eeeeec"/></svg>
<svg class="sic" style="top:118px" viewBox="0 0 16 16"><path d="M0.500,1 H6.500 L7.500,3 H13.500 V5.200 H3 V14.500 H0.500 Z" fill="#eeeeec"/><rect x="3.800" y="6.200" width="12" height="8.800" fill="#eeeeec" fill-opacity=".92"/></svg>
<svg class="sic" style="top:150px" viewBox="0 0 16 16"><path d="M3,1.200 H9.300 L13.300,5.200 V14.800 H3 Z" fill="none" stroke="#eeeeec" stroke-width="2"/><path d="M8.800,1.500 V5.700 H13" fill="none" stroke="#eeeeec" stroke-width="1.300"/></svg>
<svg class="sic" style="top:182px" viewBox="0 0 16 16"><path d="M8,5.500 V12.500" stroke="#eeeeec" stroke-width="2.200" fill="none"/><path d="M3,8.300 L8,13.300 L13,8.300" fill="none" stroke="#eeeeec" stroke-width="2.200"/><rect x="6.900" y="0.800" width="2.200" height="1.600" fill="#eeeeec"/><rect x="6.900" y="3.200" width="2.200" height="1.600" fill="#eeeeec"/></svg>
<svg class="sic" style="top:214px" viewBox="0 0 16 16"><path d="M6,3 L14.600,1.600 V11.500 M6,3 V13" fill="none" stroke="#eeeeec" stroke-width="2"/><path d="M6,5.300 L14.600,3.900" stroke="#eeeeec" stroke-width="1.800"/><circle cx="3.700" cy="12.700" r="2.500" fill="none" stroke="#eeeeec" stroke-width="1.900"/><circle cx="12.300" cy="11.300" r="2.500" fill="none" stroke="#eeeeec" stroke-width="1.900"/></svg>
<svg class="sic" style="top:246px" viewBox="0 0 16 16"><path d="M0.800,4.500 H4 L5.300,2.300 H10.700 L12,4.500 H15.200 V14.200 H0.800 Z" fill="#eeeeec"/><circle cx="8" cy="9" r="3.300" fill="#4f4e48"/><circle cx="8" cy="9" r="1.600" fill="#eeeeec"/></svg>
<svg class="sic" style="top:278px" viewBox="0 0 16 16"><rect x="5" y="3.500" width="10.500" height="9" rx="1" fill="#eeeeec"/><path d="M1,4.500 L4.500,8 L1,11.500 Z" fill="#eeeeec"/></svg>
<svg class="sic" style="top:310px" viewBox="0 0 16 16"><path d="M0.800,4.600 H15.200" stroke="#eeeeec" stroke-width="1.800"/><path d="M4.800,3.800 Q4.800,1.300 8,1.300 Q11.200,1.300 11.200,3.800" fill="none" stroke="#eeeeec" stroke-width="1.500"/><path d="M2,6.200 Q2,15 4.500,15 H11.500 Q14,15 14,6.200 Z" fill="none" stroke="#eeeeec" stroke-width="1.700"/><path d="M5.700,7.500 V13 M8,7.500 V13 M10.300,7.500 V13" stroke="#eeeeec" stroke-width="1.200"/></svg>
<svg class="sic" style="top:351px" viewBox="0 0 16 16"><rect x="1.800" y="1.800" width="12.400" height="12.400" rx="1.800" fill="none" stroke="#eeeeec" stroke-width="1.800"/><rect x="4.500" y="8" width="6" height="6" fill="#eeeeec"/><rect x="6" y="10" width="2.200" height="3" fill="#4f4e48"/></svg>
<svg class="sic" style="top:383px" viewBox="0 0 16 16"><rect x="2" y="1" width="12" height="14" fill="#eeeeec"/><circle cx="8" cy="7" r="3" fill="none" stroke="#3a3935" stroke-width="1.700"/><path d="M5,7 V10.300 H7" stroke="#3a3935" stroke-width="1.200" fill="none"/></svg>
<svg class="sic" style="top:424px" viewBox="0 0 16 16"><path d="M8,2.500 V13.500 M2.500,8 H13.500" stroke="#eeeeec" stroke-width="1.800"/></svg>
<div class="abs" style="left:161px;top:377px;width:30px;height:28px;border-radius:5px;background:#6a6862;box-shadow:0 0 0 1px rgba(0,0,0,.15)"></div>
<svg class="abs" style="left:169px;top:384px" width="14" height="14" viewBox="0 0 14 14"><path d="M7,1.500 L13,8 H1 Z" fill="#eeeeec"/><rect x="1" y="10" width="12" height="2.200" fill="#eeeeec"/></svg>
<svg class="fic" style="left:223.8px;top:57px" width="46" height="38"><use href="#folder"/></svg>
<div class="flabel" style="left:192.5px;top:99px;letter-spacing:0">base</div>
<svg class="fic" style="left:316.8px;top:57px" width="46" height="38"><use href="#folder"/></svg>
<div class="flabel" style="left:285.5px;top:99px;letter-spacing:0">meta-
openembe
dded</div>
<svg class="fic" style="left:409.8px;top:57px" width="46" height="38"><use href="#folder"/></svg>
<div class="flabel" style="left:378.5px;top:99px;letter-spacing:0">meta-qt5</div>
<svg class="fic" style="left:502.8px;top:57px" width="46" height="38"><use href="#folder"/></svg>
<div class="flabel" style="left:471.5px;top:99px;letter-spacing:0">meta-
semidrive</div>
<svg class="fic" style="left:595.8px;top:57px" width="46" height="38"><use href="#folder"/></svg>
<div class="flabel" style="left:564.5px;top:99px;letter-spacing:0">out</div>
<svg class="fic" style="left:688.8px;top:57px" width="46" height="38"><use href="#folder"/></svg>
<div class="flabel" style="left:657.5px;top:99px;letter-spacing:0">poky</div>
<svg class="fic" style="left:781.8px;top:57px" width="46" height="38"><use href="#folder"/></svg>
<div class="flabel" style="left:750.5px;top:99px;letter-spacing:0">prebuilt</div>
<svg class="fic" style="left:223.8px;top:166px" width="46" height="38"><use href="#folder"/></svg>
<svg class="fic" style="left:251.5px;top:191px" width="17" height="12"><use href="#lnk"/></svg>
<div class="flabel" style="left:192.5px;top:208px;letter-spacing:0">project_
chipcfg_
link</div>
<svg class="fic" style="left:316.8px;top:166px" width="46" height="38"><use href="#folder"/></svg>
<div class="flabel" style="left:285.5px;top:208px;letter-spacing:0">source</div>
<svg class="fic" style="left:414.0px;top:156.5px" width="38" height="47"><use href="#docscript"/></svg>
<svg class="fic" style="left:435.5px;top:191.5px" width="17" height="12"><use href="#lnk"/></svg>
<div class="flabel" style="left:378.5px;top:208px;letter-spacing:0">build.sh</div>
<svg class="fic" style="left:507.0px;top:156.5px" width="38" height="47"><use href="#docscript"/></svg>
<div class="flabel" style="left:471.5px;top:208px;letter-spacing:0">env.sh</div>
<svg class="fic" style="left:600.0px;top:156.5px" width="38" height="47"><use href="#doctext"/></svg>
<svg class="fic" style="left:621.5px;top:191.5px" width="17" height="12"><use href="#lnk"/></svg>
<div class="flabel" style="left:564.5px;top:208px;letter-spacing:-.7px">README</div>
<svg class="fic" style="left:693.0px;top:156.5px" width="38" height="47"><use href="#docscript"/></svg>
<svg class="fic" style="left:714.5px;top:191.5px" width="17" height="12"><use href="#lnk"/></svg>
<div class="flabel" style="left:657.5px;top:208px;letter-spacing:0">sd_setup.
sh</div>
<svg class="fic" style="left:786.0px;top:156.5px" width="38" height="47"><use href="#docscript"/></svg>
<svg class="fic" style="left:807.5px;top:191.5px" width="17" height="12"><use href="#lnk"/></svg>
<div class="flabel" style="left:750.5px;top:208px;letter-spacing:0">setup-
environmen
t</div>
</div>
<div id="term">
<div id="ttitle"><span>ddj@ubuntu: ~/YD9X/MYD-YD9X-SDK_V1.0/source/ssdk</span>
<svg class="abs" style="left:780px;top:0" width="71" height="31" viewBox="0 0 71 31">
<defs><linearGradient id="wcg" x1="0" y1="0" x2="0" y2="1"><stop offset="0" stop-color="#8d8b84"/><stop offset="1" stop-color="#6f6d67"/></linearGradient>
<linearGradient id="wcc" x1="0" y1="0" x2="0" y2="1"><stop offset="0" stop-color="#f37a4d"/><stop offset="1" stop-color="#e2501c"/></linearGradient></defs>
<circle cx="17" cy="15.200" r="8" fill="url(#wcg)" stroke="#3b3a36" stroke-width=".8"/><circle cx="37" cy="15.200" r="8" fill="url(#wcg)" stroke="#3b3a36" stroke-width=".8"/><circle cx="57" cy="15.200" r="8" fill="url(#wcc)" stroke="#7a2c10" stroke-width=".8"/>
<g stroke="#45443f" stroke-width="1.300" fill="none"><path d="M13.200,15.700 H20.800"/><rect x="33.500" y="11.700" width="7" height="7"/></g>
<path d="M54.200,12.400 L59.800,18 M59.800,12.400 L54.200,18" stroke="#5e1d08" stroke-width="1.400"/>
</svg></div>
<div id="tmenu">
<span style="left:6.5px;letter-spacing:0">File</span>
<span style="left:42px;letter-spacing:0">Edit</span>
<span style="left:81px;letter-spacing:0">View</span>
<span style="left:126px;letter-spacing:0">Search</span>
<span style="left:183px;letter-spacing:.3px">Terminal</span>
<span style="left:253px;letter-spacing:0">Help</span>
</div>
<div id="tbody">
<div class="tl" style="top:0px;">(Top)</div>
<div class="abs" style="left:0;top:18px;width:837px;height:18px;background:#c4a000"></div>
<div class="tl" style="top:18px;color:#5a4d1a;font-weight:bold;-webkit-text-stroke:0">                                          Main menu</div>
<div class="abs" style="left:0;top:36px;width:171px;height:18px;background:#3465a4"></div>
<div class="tl" style="top:36px;color:#fff;font-weight:bold;-webkit-text-stroke:0">    Arch Type  ---&gt;</div>
<div class="tl" style="top:54px;">    Board Common Features  ---&gt;</div>
<div class="tl" style="top:72px;">    RTOS Features  ---&gt;</div>
<div class="tl" style="top:90px;">    Device Drivers  ---&gt;</div>
<div class="tl" style="top:108px;">    Library Routines  ---&gt;</div>
<div class="tl" style="top:126px;">    Middleware Routines  ---&gt;</div>
<div class="tl" style="top:144px;">    Driver and Application Examples  ---&gt;</div>
<div class="tl" style="top:162px;">    Tester Routines  ----</div>
<div class="tl" style="top:180px;">    Validation Options  ----</div>
<div class="abs" style="left:0;top:432px;width:837px;height:18px;background:#c4a000"></div>
<div class="tl" style="top:450px;">[Space/Enter] Toggle/enter  [ESC] Leave menu           [S] Save</div>
<div class="tl" style="top:468px;">[O] Load                    [?] Symbol info            [/] Jump to symbol</div>
<div class="tl" style="top:486px;">[F] Toggle show-help mode   [C] Toggle show-name mode  [A] Toggle show-all mode</div>
<div class="tl" style="top:504px;">[Q] Quit (prompts for save) [D] Save minimal config (advanced)</div>
</div><div id="tpad"></div><div id="tscroll"></div>
</div>
<!-- watermarks -->
<svg class="abs" style="left:1082px;top:613px" width="50" height="50" viewBox="0 0 50 50"><g fill="#d92b2b" fill-opacity=".3">
<rect x="0" y="0" width="10" height="10"/><rect x="12.700" y="0" width="10" height="10"/><rect x="25.400" y="0" width="10" height="10"/><rect x="38.100" y="0" width="10" height="10"/>
<rect x="0" y="12.700" width="10" height="10"/><rect x="38.100" y="12.700" width="10" height="10"/>
<rect x="0" y="25.400" width="10" height="10"/><rect x="25.400" y="25.400" width="10" height="10"/><rect x="38.100" y="25.400" width="10" height="10"/>
<rect x="0" y="38.100" width="10" height="10"/><rect x="12.700" y="38.100" width="10" height="10"/><rect x="25.400" y="38.100" width="10" height="10"/><rect x="38.100" y="38.100" width="10" height="10"/></g></svg>
<div class="abs" style="left:1142.5px;top:606.3px;font:bold 32px/40px 'Liberation Sans',sans-serif;color:rgba(70,70,70,.33);white-space:pre;transform-origin:0 0;transform:scaleX(1.0875)">eefocus</div>
<div class="abs" style="left:1145.5px;top:641.5px;font:16px/20px 'Noto Sans CJK SC','WenQuanYi Zen Hei',sans-serif;letter-spacing:.8px;color:rgba(70,70,70,.28);white-space:pre">与非网</div>
<div class="abs" style="left:1543.5px;top:1169.5px;font:500 36.4px/54px 'Noto Sans CJK SC','WenQuanYi Zen Hei',sans-serif;letter-spacing:-.25px;color:#fdbcc6;text-shadow:0 0 2px rgba(200,40,70,.9),0 0 1px rgba(200,40,70,.9);white-space:pre">没有任何方法能阻挡</div>
<div class="abs" style="left:1543.5px;top:1227.5px;font:500 36.4px/54px 'Noto Sans CJK SC','WenQuanYi Zen Hei',sans-serif;letter-spacing:-.25px;color:#eefaf4;text-shadow:0 0 2px rgba(120,20,40,.9),0 0 1px rgba(120,20,40,.9);white-space:pre">就算知道爱都有翅膀</div>
<div class="abs" style="left:2074px;top:1234px;width:280px;height:40px;background:#fdfdfd"></div>
<svg class="abs" style="left:2081px;top:1234px" width="42" height="40" viewBox="0 0 42 40"><g fill="#0b3f94">
 <path d="M7.600,5 A18.600,18.600 0 0 1 33.500,7 L24.900,14.600 Q22,10.500 18.400,8.300 Q13,5.300 7.600,5 Z"/>
 <path d="M21.500,18.900 C19,14.500 15,11.200 9.700,11.200 C5,11.200 1.200,15 1.200,19.500 C1.200,24 5,27.400 9.700,27.400 C15,27.400 19,23.200 21.500,18.900 Z"/>
 <path d="M36.700,12.200 A18.600,18.600 0 0 1 37,27.100 L29.400,19.800 Z"/>
 <path d="M5.900,32.600 A18.600,18.600 0 0 0 33.900,32.300 L25.300,24 Q22,28.500 18.400,30.500 Q13,33 5.900,32.600 Z"/>
</g></svg>
<div class="abs" style="left:2125px;top:1236px;font:17px/24px 'Noto Sans CJK SC','WenQuanYi Zen Hei',sans-serif;letter-spacing:.15px;color:#4a4a4a;white-space:pre">深圳长欣自动化设备有限公司</div>
<div class="abs" id="engco" style="left:2125px;top:1258px;font:bold 8px/10px 'Liberation Sans',sans-serif;color:#555;white-space:pre;transform-origin:0 0;transform:scaleX(.969)">SHENZHEN CHANGXIN AUTOMATION EQUIPMENT CO. LTD</div>
</body></html>
